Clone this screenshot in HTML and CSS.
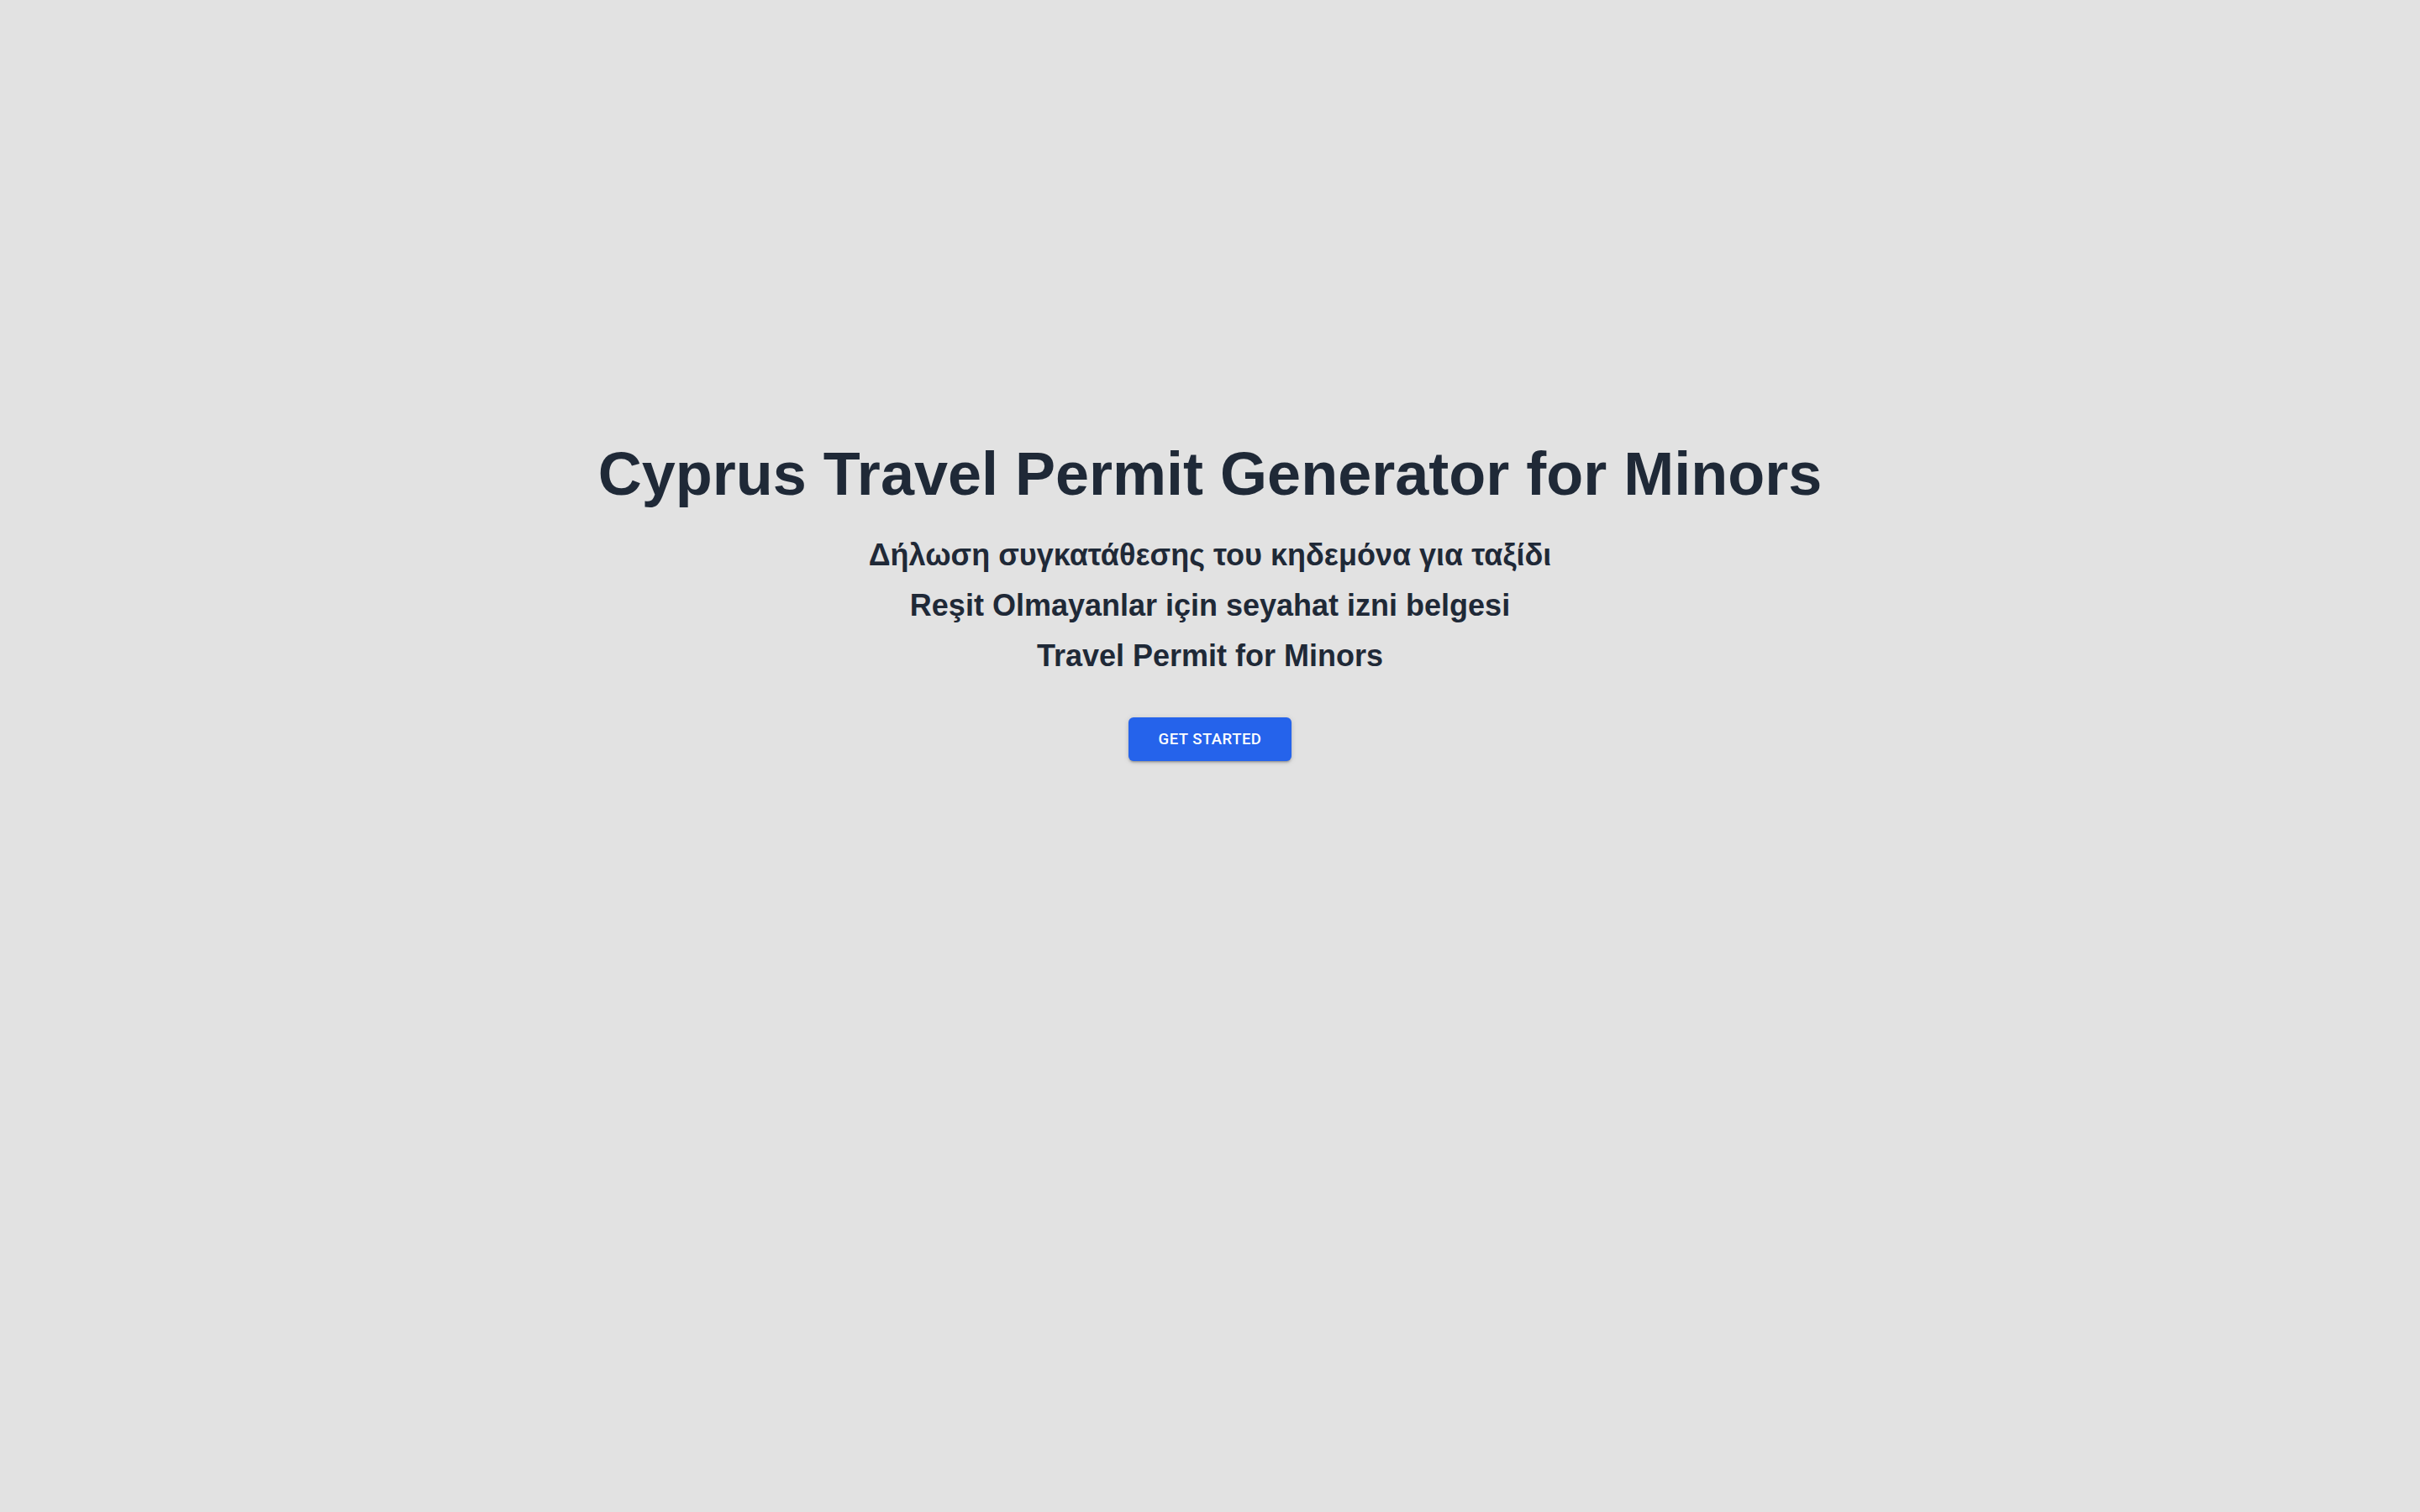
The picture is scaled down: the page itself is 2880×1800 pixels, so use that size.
FILE: index.html
```html
<!DOCTYPE html>
<html lang="en">
<head>
<meta charset="utf-8">
<title>Cyprus Travel Permit Generator for Minors</title>
<link rel="stylesheet" href="styles.css">
</head>
<body>
<main class="hero">
  <h1 class="hero-title">Cyprus Travel Permit Generator for Minors</h1>
  <div class="hero-subtitles">
    <p class="hero-sub">Δήλωση συγκατάθεσης του κηδεμόνα για ταξίδι</p>
    <p class="hero-sub">Reşit Olmayanlar için seyahat izni belgesi</p>
    <p class="hero-sub">Travel Permit for Minors</p>
  </div>
  <button class="btn-primary" type="button">Get Started</button>
</main>
</body>
</html>
```
FILE: styles.css
```css
html, body {
  margin: 0;
  padding: 0;
}

body {
  background: #e2e2e2;
  font-family: "Liberation Sans", Arial, sans-serif;
  color: #1f2937;
  min-height: 1800px;
}

.hero {
  display: flex;
  flex-direction: column;
  align-items: center;
  padding-top: 528px;
}

.hero-title {
  margin: 0;
  font-size: 72px;
  line-height: 72px;
  font-weight: 700;
  color: #1f2937;
}

.hero-subtitles {
  display: flex;
  flex-direction: column;
  align-items: center;
  margin-top: 31px;
}

.hero-sub {
  margin: 0;
  font-size: 36px;
  line-height: 60px;
  font-weight: 700;
  color: #1f2937;
}

.btn-primary {
  margin-top: 43px;
  width: 194px;
  height: 52px;
  border: none;
  border-radius: 6px;
  background: #2563eb;
  color: #ffffff;
  font-family: Roboto, "Liberation Sans", sans-serif;
  font-weight: 500;
  font-size: 18.5px;
  letter-spacing: 0.5px;
  text-transform: uppercase;
  box-shadow: 0 3px 2px -2px rgba(0,0,0,0.2), 0 2px 3px 0 rgba(0,0,0,0.14), 0 1px 7px 0 rgba(0,0,0,0.12);
  cursor: pointer;
  padding: 0;
}
```
